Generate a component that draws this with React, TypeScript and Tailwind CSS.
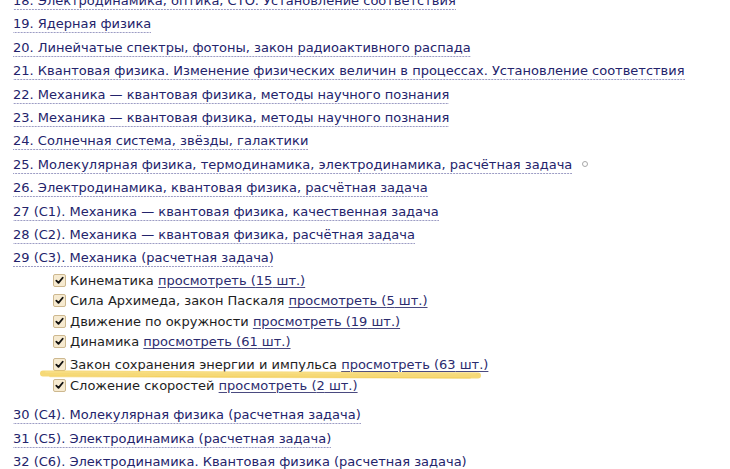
import React from "react";

const mainBefore = [
  "18. Электродинамика, оптика, СТО. Установление соответствия",
  "19. Ядерная физика",
  "20. Линейчатые спектры, фотоны, закон радиоактивного распада",
  "21. Квантовая физика. Изменение физических величин в процессах. Установление соответствия",
  "22. Механика — квантовая физика, методы научного познания",
  "23. Механика — квантовая физика, методы научного познания",
  "24. Солнечная система, звёзды, галактики",
  "25. Молекулярная физика, термодинамика, электродинамика, расчётная задача",
  "26. Электродинамика, квантовая физика, расчётная задача",
  "27 (С1). Механика — квантовая физика, качественная задача",
  "28 (С2). Механика — квантовая физика, расчётная задача",
  "29 (С3). Механика (расчетная задача)",
];

const subs = [
  { label: "Кинематика", n: 15 },
  { label: "Сила Архимеда, закон Паскаля", n: 5 },
  { label: "Движение по окружности", n: 19 },
  { label: "Динамика", n: 61 },
  { label: "Закон сохранения энергии и импульса", n: 63, hl: true },
  { label: "Сложение скоростей", n: 2 },
];

const mainAfter = [
  "30 (С4). Молекулярная физика (расчетная задача)",
  "31 (С5). Электродинамика (расчетная задача)",
  "32 (С6). Электродинамика. Квантовая физика (расчетная задача)",
];

function MainRow({ text, circle }: { text: string; circle?: boolean }) {
  return (
    <div className="h-[23.4px] leading-[23.4px] whitespace-nowrap">
      <span className="text-[#23236b] pb-[2px] bg-[linear-gradient(to_right,#9c9cc4_67%,transparent_0)] bg-[length:3px_1px] bg-repeat-x bg-bottom cursor-pointer">
        {text}
      </span>
      {circle && (
        <span className="inline-block ml-[10px] w-[6px] h-[6px] rounded-full border border-[#a8a8a8] align-middle relative -top-px" />
      )}
    </div>
  );
}

function Check() {
  return (
    <span className="inline-flex items-center justify-center w-[13px] h-[13px] rounded-[2px] border border-[#cdb88f] bg-[#f6ead0] mr-[4px] align-middle relative -top-px">
      <svg width="9" height="9" viewBox="0 0 9 9">
        <path d="M1.3 4.6 L3.5 6.9 L7.7 1.8" fill="none" stroke="#111" strokeWidth="1.8" strokeLinecap="round" strokeLinejoin="round" />
      </svg>
    </span>
  );
}

export default function App() {
  return (
    <div className="w-[730px] h-[469px] overflow-hidden bg-white relative" style={{ fontFamily: '"DejaVu Sans", Verdana, sans-serif' }}>
      <div className="pl-[13px] -mt-[11px] text-[13px]">
        {mainBefore.map((t, i) => (
          <MainRow key={t + i} text={t} circle={i === 7} />
        ))}
        <div className="pl-[40px] mt-[1px] mb-[7px]">
          {subs.map((s) => (
            <div
              key={s.label}
              className={"h-[20.6px] leading-[20.6px] whitespace-nowrap text-[#1e1e1e] " + (s.hl ? "mt-[2px]" : "")}
            >
              <Check />
              <span>{s.label} </span>
              <span className="text-[#2b2b6e] underline decoration-[#4a4a80] underline-offset-[2px] cursor-pointer">
                просмотреть ({s.n} шт.)
              </span>
            </div>
          ))}
        </div>
        {mainAfter.map((t) => (
          <MainRow key={t} text={t} />
        ))}
      </div>
      <svg className="absolute left-0 top-0 pointer-events-none" width="730" height="469" viewBox="0 0 730 469">
        <path d="M43 373.5 C 120 373, 200 374.5, 280 374.5 S 420 375, 478 375.5" fill="none" stroke="#f4cf55" strokeOpacity="0.8" strokeWidth="6" strokeLinecap="round" />
        <path d="M46 372 C 150 372, 300 373, 475 373.5" fill="none" stroke="#f8e08a" strokeOpacity="0.6" strokeWidth="2" strokeLinecap="round" />
        <path d="M50 376.5 C 180 377, 330 377.5, 470 378" fill="none" stroke="#f2c94c" strokeOpacity="0.5" strokeWidth="1.5" strokeLinecap="round" />
      </svg>
    </div>
  );
}
